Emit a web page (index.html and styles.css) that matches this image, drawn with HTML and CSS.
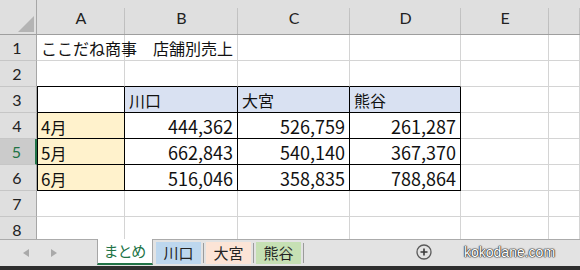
FILE: index.html
```html
<!DOCTYPE html>
<html lang="ja">
<head>
  <meta charset="UTF-8" />
  <title>店舗別売上</title>
  <link rel="stylesheet" href="styles.css">
</head>
<body>
  <div class="book">
    <div class="grid">
      <div class="corner"><span class="tri"></span></div>
      <div class="hd">A</div>
      <div class="hd">B</div>
      <div class="hd">C</div>
      <div class="hd">D</div>
      <div class="hd">E</div>
      <div class="hd"></div>

      <div class="rh">1</div>
      <div class="c">ここだね商事　店舗別売上</div>
      <div class="c"></div>
      <div class="c"></div>
      <div class="c"></div>
      <div class="c"></div>
      <div class="c"></div>

      <div class="rh">2</div>
      <div class="c top"></div>
      <div class="c top"></div>
      <div class="c top"></div>
      <div class="c top"></div>
      <div class="c"></div>
      <div class="c"></div>

      <div class="rh">3</div>
      <div class="c bx lx"></div>
      <div class="c bx blue">川口</div>
      <div class="c bx blue">大宮</div>
      <div class="c bx blue">熊谷</div>
      <div class="c"></div>
      <div class="c"></div>

      <div class="rh">4</div>
      <div class="c bx lx tan"><span class="dg">4</span>月</div>
      <div class="c bx num">444,362</div>
      <div class="c bx num">526,759</div>
      <div class="c bx num">261,287</div>
      <div class="c"></div>
      <div class="c"></div>

      <div class="rh sel">5</div>
      <div class="c bx lx tan"><span class="dg">5</span>月</div>
      <div class="c bx num">662,843</div>
      <div class="c bx num">540,140</div>
      <div class="c bx num">367,370</div>
      <div class="c"></div>
      <div class="c"></div>

      <div class="rh">6</div>
      <div class="c bx lx tan"><span class="dg">6</span>月</div>
      <div class="c bx num">516,046</div>
      <div class="c bx num">358,835</div>
      <div class="c bx num">788,864</div>
      <div class="c"></div>
      <div class="c"></div>

      <div class="rh">7</div>
      <div class="c"></div>
      <div class="c"></div>
      <div class="c"></div>
      <div class="c"></div>
      <div class="c"></div>
      <div class="c"></div>

      <div class="rh">8</div>
      <div class="c"></div>
      <div class="c"></div>
      <div class="c"></div>
      <div class="c"></div>
      <div class="c"></div>
      <div class="c"></div>
    </div>

    <div class="tabs">
      <div class="nav">
        <svg width="6" height="8" viewBox="0 0 6 8"><path d="M6 0 L0 4 L6 8 Z" fill="#a9a9a9"/></svg>
        <svg width="6" height="8" viewBox="0 0 6 8"><path d="M0 0 L6 4 L0 8 Z" fill="#a9a9a9"/></svg>
      </div>
      <div class="tab active">まとめ</div>
      <div class="tab kawaguchi">川口</div>
      <div class="sep"></div>
      <div class="tab omiya">大宮</div>
      <div class="sep"></div>
      <div class="tab kumagaya">熊谷</div>
      <div class="sep"></div>
      <svg class="plus" width="16" height="16" viewBox="0 0 16 16">
        <circle cx="8" cy="8" r="7" fill="none" stroke="#5a5a5a" stroke-width="1.3"/>
        <path d="M8 4.5 V11.5 M4.5 8 H11.5" stroke="#3a3a3a" stroke-width="1.6"/>
      </svg>
      <span class="mark">kokodane.com</span>
    </div>
    <div class="status"></div>
  </div>
</body>
</html>
```

FILE: styles.css
```css
body {
  margin: 0;
  overflow: hidden;
  background-color: #fff;
}

.book {
  width: 580px;
  height: 270px;
  display: flex;
  flex-direction: column;
}

.grid {
  height: 239px;
  overflow: hidden;
  display: grid;
  grid-template-columns: 37px 88px 113px 112px 111px 88px 1fr;
  grid-template-rows: 35px repeat(8, 26px);
  font-family: "Noto Sans CJK JP", sans-serif;
}

.grid > div {
  box-sizing: border-box;
}

.corner {
  background-color: #dfdfdf;
  border-right: 1px solid #a6a6a6;
  border-bottom: 1px solid #9e9e9e;
  display: flex;
  justify-content: flex-end;
  align-items: flex-end;
  padding: 0 2px 2px 0;
}

.tri {
  width: 0;
  height: 0;
  border-left: 16px solid transparent;
  border-bottom: 16px solid #b4b4b4;
}

.hd {
  background: linear-gradient(#c4c4c4, #bcbcbc) right bottom / 1px 26px no-repeat, #dfdfdf;
  border-bottom: 1px solid #9e9e9e;
  font-family: Lato, "Liberation Sans", sans-serif;
  font-size: 16px;
  color: #222;
  text-align: center;
  padding-top: 8px;
}

.rh {
  background-color: #dfdfdf;
  border-right: 1px solid #a6a6a6;
  border-bottom: 1px solid #c6c6c6;
  font-family: Lato, "Liberation Sans", sans-serif;
  font-size: 16px;
  color: #222;
  text-align: center;
  line-height: 25px;
  padding-right: 2px;
}

.rh.sel {
  background-color: #cbcbcb;
  color: #217346;
  border-right: 2px solid #217346;
}

.c {
  border-right: 1px solid #d4d4d4;
  border-bottom: 1px solid #d4d4d4;
  font-size: 16px;
  line-height: 27px;
  padding: 0 4px;
  white-space: nowrap;
  color: #111;
}

.dg {
  font-size: 17px;
}

.c.top {
  border-bottom-color: #000;
}

.c.bx {
  border-right-color: #000;
  border-bottom-color: #000;
}

.c.lx {
  box-shadow: inset 1px 0 0 #000;
}

.blue {
  background-color: #d9e1f2;
}

.tan {
  background-color: #fff2cc;
}

.num {
  text-align: right;
  font-size: 18px;
  line-height: 26px;
}

.tabs {
  height: 27px;
  background-color: #e3e3e3;
  box-shadow: inset 0 1px 0 #ababab;
  display: flex;
  align-items: flex-start;
  font-family: "Noto Sans CJK JP", sans-serif;
  font-size: 15px;
  font-feature-settings: "palt";
}

.nav {
  width: 97px;
  height: 27px;
  display: flex;
  align-items: center;
  gap: 22px;
  padding-left: 23px;
  box-sizing: border-box;
}

.tab {
  width: 45px;
  height: 22px;
  margin-top: 3px;
  margin-left: 2px;
  text-align: center;
  line-height: 22px;
  color: #222;
}

.tab.active {
  width: 56px;
  height: 26px;
  margin: 0;
  box-sizing: border-box;
  background-color: #fff;
  border-left: 1px solid #a6a6a6;
  border-right: 1px solid #a6a6a6;
  border-bottom: 2px solid #217346;
  color: #217346;
  line-height: 23px;
}

.kawaguchi {
  margin-left: 3px;
  background-color: #bdd7ee;
}

.omiya {
  background-color: #fce4d6;
}

.kumagaya {
  background-color: #c6e0b4;
}

.sep {
  width: 1px;
  height: 20px;
  margin-top: 4px;
  margin-left: 2px;
  background-color: #9b9b9b;
}

.plus {
  margin: 5px 0 0 112px;
}

.mark {
  margin: 4px 0 0 32px;
  font-family: "Liberation Sans", sans-serif;
  font-size: 14px;
  line-height: 18px;
  color: #fff;
  text-shadow: 0 0 1px #222, 0 0 1px #222, 0 0 1px #222, 0 0 2px #555;
}

.status {
  height: 4px;
  background-color: #2e2e2e;
}
```
